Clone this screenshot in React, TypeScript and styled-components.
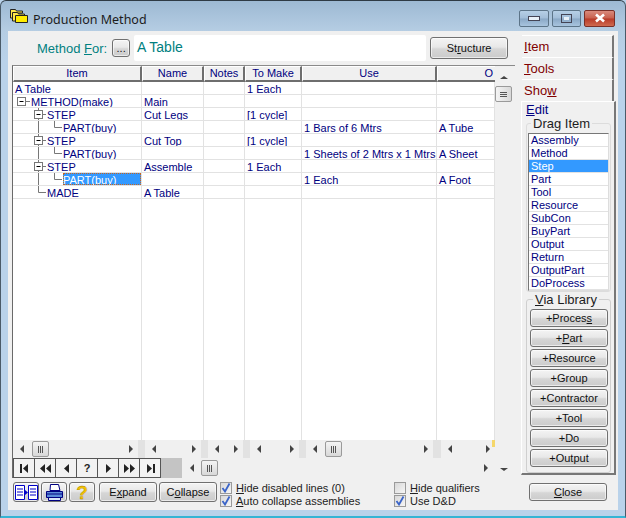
import React from 'react'
import styled, { createGlobalStyle, css } from 'styled-components'

const GlobalStyle = createGlobalStyle`
  html, body { margin: 0; padding: 0; background: #b9d2ea; }
  body { font-family: "Liberation Sans", Arial, sans-serif; font-size: 11px; color: #000; }
  * { box-sizing: border-box; }
  u { text-underline-offset: 1px; }
`

const navy = '#000080'

const Win = styled.div`
  width: 626px;
  height: 518px;
  display: flex;
  flex-direction: column;
  background: linear-gradient(180deg, #9db9d3 0, #b5cde3 30px, #b9d2ea 60px);
  border: 1px solid #4a5a68;
  border-top-color: #2e3a44;
  border-bottom: 2px solid #35b4d4;
  border-radius: 6px 6px 0 0;
  padding: 0 7px 6px 7px;
`
const TitleBar = styled.div`
  height: 30px;
  flex: none;
  display: flex;
  align-items: center;
  padding-left: 2px;
  gap: 5px;
`
const TitleText = styled.span`
  font-family: "Noto Sans", sans-serif;
  font-size: 12.5px;
  color: #1c1c1c;
  flex: 1;
  margin-top: 6px;
`
const Caption = styled.div`
  display: flex;
  gap: 3px;
  margin: 4px 3px 0 0;
`
const CapBtn = styled.div<{ $w: number; $close?: boolean }>`
  width: ${(p) => p.$w}px;
  height: 17px;
  display: flex;
  align-items: center;
  justify-content: center;
  border-radius: 2px;
  border: 1px solid ${(p) => (p.$close ? '#7a3028' : '#5c7488')};
  background: ${(p) =>
    p.$close
      ? 'linear-gradient(180deg, #d98a7c 0, #c8604e 48%, #b83a28 52%, #cf6a50 100%)'
      : 'linear-gradient(180deg, #b6cfe6 0, #a2bdd8 48%, #8aa8c6 52%, #a8c4de 100%)'};
`
const Body = styled.div`
  flex: 1;
  min-height: 0;
  display: flex;
  background: #f0f0f0;
  padding-top: 4px;
`
const Main = styled.div`
  width: 507px;
  flex: none;
  display: flex;
  flex-direction: column;
`
const TopRow = styled.div`
  height: 26px;
  display: flex;
  align-items: center;
  padding-left: 29px;
`
const MethodLabel = styled.span`
  color: #008080;
  font-size: 13px;
  margin-right: 5px;
  white-space: nowrap;
`
const MethodInput = styled.div`
  width: 292px;
  height: 26px;
  margin-left: 4px;
  margin-right: 4px;
  background: #fff;
  border-radius: 2px;
  color: #008080;
  font-size: 14px;
  line-height: 25px;
  padding-left: 3px;
`
const Btn = styled.button<{ $w?: number; $h?: number }>`
  width: ${(p) => p.$w ?? 78}px;
  height: ${(p) => p.$h ?? 18}px;
  flex: none;
  padding: 0;
  font-family: inherit;
  font-size: 11px;
  color: #111;
  display: inline-flex;
  align-items: center;
  justify-content: center;
  border: 1px solid #707070;
  border-radius: 3px;
  background: linear-gradient(180deg, #f4f4f4 0, #e8e8e8 45%, #d6d6d6 55%, #cbcbcb 100%);
  box-shadow: inset 0 0 0 1px rgba(255, 255, 255, 0.6);
`
const Frame = styled.div`
  margin: 4px 0 0 4px;
  height: 413px;
  display: flex;
  border-top: 1px solid #8a8a8a;
  border-left: 1px solid #6a6a6a;
`
const GridArea = styled.div`
  width: 482px;
  flex: none;
  display: flex;
  flex-direction: column;
`
const cols = '129px 62px 41px 57px 135px 58px'
const HeaderRow = styled.div`
  height: 16px;
  flex: none;
  display: grid;
  grid-template-columns: ${cols};
`
const HeadCell = styled.div<{ $right?: boolean }>`
  color: ${navy};
  font-size: 11px;
  line-height: 13px;
  text-align: ${(p) => (p.$right ? 'right' : 'center')};
  padding-right: ${(p) => (p.$right ? 2 : 0)}px;
  background: #f0f0f0;
  border-top: 1px solid #fff;
  border-left: 1px solid #fff;
  border-right: 2px solid #6e6e6e;
  border-bottom: 2px solid #6e6e6e;
  overflow: hidden;
  &:last-child { border-right: 0; }
`
const RowsArea = styled.div`
  flex: 1;
  min-height: 0;
  background: #fff;
  display: grid;
  grid-template-columns: ${cols};
  grid-template-rows: repeat(9, 13px) 1fr;
`
const Cell = styled.div`
  height: 13px;
  font-size: 11px;
  line-height: 14px;
  color: ${navy};
  white-space: nowrap;
  overflow: hidden;
  padding-left: 2px;
  border-right: 1px solid #e2e2e2;
  border-bottom: 1px solid #e2e2e2;
`
const TreeCell = styled(Cell)`
  display: flex;
  padding-left: 0;
`
const TreeLabel = styled.span<{ $sel?: boolean }>`
  ${(p) =>
    p.$sel &&
    css`
      background: #3399ff;
      color: #fff;
      flex: 1;
      outline: 1px dotted #c8651e;
      outline-offset: -1px;
    `}
`
const TailCell = styled.div`
  border-right: 1px solid #e2e2e2;
`
const ScrollRow = styled.div`
  height: 18px;
  flex: none;
  display: grid;
  grid-template-columns: 125px 7px 56px 7px 35px 7px 49px 7px 127px 8px 54px;
  background: #f0f0f0;
`
const Sep = styled.div`
  background: #e2e2e2;
`
const HBar = styled.div`
  position: relative;
  display: flex;
  align-items: center;
  justify-content: space-between;
  padding: 0 5px 0 7px;
  background: #f0f0f0;
`
const HBarThumbed = styled(HBar)`
  justify-content: flex-start;
`
const YellowMark = styled.div`
  position: absolute;
  right: 0;
  top: 0;
  width: 3px;
  height: 7px;
  background: #f5d76a;
`
const Thumb = styled.div<{ $v?: boolean }>`
  width: 17px;
  height: 16px;
  flex: none;
  display: flex;
  flex-direction: ${(p) => (p.$v ? 'column' : 'row')};
  align-items: center;
  justify-content: center;
  gap: 1px;
  border: 1px solid #9a9a9a;
  border-radius: 2px;
  background: linear-gradient(${(p) => (p.$v ? '90deg' : '180deg')}, #f4f4f4, #d8d8d8);
`
const Grip = styled.i<{ $v?: boolean }>`
  display: block;
  width: ${(p) => (p.$v ? 7 : 1)}px;
  height: ${(p) => (p.$v ? 1 : 7)}px;
  background: #555;
`
const Tri = styled.i<{ $d: 'l' | 'r' | 'u' | 'd' }>`
  display: block;
  width: 0;
  height: 0;
  flex: none;
  border-style: solid;
  border-color: transparent;
  ${(p) => p.$d === 'l' && css`border-width: 4px 4px 4px 0; border-right-color: #444;`}
  ${(p) => p.$d === 'r' && css`border-width: 4px 0 4px 4px; border-left-color: #444;`}
  ${(p) => p.$d === 'u' && css`border-width: 0 4px 3px 4px; border-bottom-color: #444;`}
  ${(p) => p.$d === 'd' && css`border-width: 3px 4px 0 4px; border-top-color: #444;`}
`
const Spacer = styled.div`
  flex: 1;
`
const ArrowGap = styled.div<{ $w: number; $h?: number }>`
  width: ${(p) => p.$w}px;
  height: ${(p) => p.$h ?? 1}px;
  flex: none;
`
const NavRow = styled.div`
  height: 20px;
  flex: none;
  display: flex;
  align-items: center;
`
const NavBtns = styled.div`
  display: flex;
  height: 20px;
  border: 1px solid #555;
  background: #555;
  gap: 1px;
`
const NavBtn = styled.div`
  width: 20px;
  height: 18px;
  display: flex;
  align-items: center;
  justify-content: center;
  background: #f2f2f2;
  color: #222;
  font-weight: 700;
  font-size: 11px;
`
const NavFill = styled.div`
  width: 21px;
  height: 20px;
  background: #c4c4c4;
`
const NavScroll = styled.div`
  flex: 1;
  height: 20px;
  display: flex;
  align-items: center;
  padding: 0 7px 0 8px;
  background: #f0f0f0;
`
const VBar = styled.div`
  width: 19px;
  flex: none;
  display: flex;
  flex-direction: column;
  align-items: center;
  padding: 10px 2px 7px 0;
`
const Bottom = styled.div`
  flex: 1;
  display: flex;
  align-items: flex-start;
  padding: 4px 0 0 5px;
`
const IconBtn = styled(Btn)`
  margin-right: 2px;
`
const HelpBtn = styled(IconBtn)`
  margin-right: 4px;
`
const ActionBtn = styled(Btn)`
  margin-right: 2px;
`
const CheckCol = styled.div<{ $w: number }>`
  width: ${(p) => p.$w}px;
  flex: none;
  margin: -1px 0 0 1px;
  display: flex;
  flex-direction: column;
`
const CheckLine = styled.div`
  height: 13px;
  display: flex;
  align-items: center;
  gap: 4px;
  font-size: 11px;
  color: #222;
  white-space: nowrap;
`
const CheckBox = styled.span`
  width: 12px;
  height: 12px;
  flex: none;
  display: flex;
  border: 1px solid #9a9a9a;
  background: linear-gradient(135deg, #d8d8d8, #f6f6f6);
`
const Side = styled.div`
  flex: 1;
  padding-left: 7px;
  display: flex;
  flex-direction: column;
`
const Tab = styled.div`
  height: 22px;
  width: 92px;
  padding: 3px 0 0 2px;
  color: #800000;
  font-size: 13px;
  line-height: 15px;
  background: #f0f0f0;
  border-top: 1px solid #fff;
  border-right: 2px solid #777;
`
const EditTab = styled.div`
  height: 374px;
  width: 95px;
  margin-left: -1px;
  display: flex;
  flex-direction: column;
  border-top: 1px solid #fff;
  border-left: 1px solid #fff;
  border-right: 2px solid #777;
  border-bottom: 2px solid #777;
  padding: 0 3px 0 4px;
`
const EditTitle = styled.div`
  color: ${navy};
  font-size: 13px;
  line-height: 16px;
`
const Group = styled.fieldset`
  margin: 0;
  padding: 0;
  border: 1px solid #dcdcdc;
  border-radius: 3px;
  min-width: 0;
`
const DragGroup = styled(Group)`
  margin-top: -1px;
  height: 175px;
  padding: 3px 0 0 1px;
`
const GroupTitle = styled.legend`
  font-size: 13px;
  line-height: 13px;
  color: #1c1c1c;
  padding: 0 2px;
  margin-left: 3px;
`
const ListBox = styled.div`
  width: 81px;
  height: 158px;
  background: #fff;
  border: 1px solid #777;
  border-right-color: #ddd;
  border-bottom-color: #ddd;
  overflow: hidden;
`
const ListItem = styled.div<{ $sel?: boolean }>`
  height: 13px;
  font-size: 11px;
  line-height: 13px;
  padding-left: 2px;
  color: ${(p) => (p.$sel ? '#fff' : navy)};
  background: ${(p) => (p.$sel ? '#3399ff' : '#fff')};
  border-bottom: 1px solid #e2e2e2;
`
const LibGroup = styled(Group)`
  margin-top: 1px;
  flex: 1;
  display: flex;
  flex-direction: column;
  gap: 2px;
  padding: 3px 0 0 3px;
  border-color: #cfcfcf;
`
const SideFoot = styled.div`
  padding: 8px 0 0 7px;
`
const HelpMark = styled.span`
  color: #f2c200;
  font-size: 19px;
  line-height: 19px;
  font-weight: 700;
  -webkit-text-stroke: 0.3px #a07800;
`

const tree: { label: string; kind: 'root' | 'method' | 'step' | 'part' | 'made'; sel?: boolean; cells: string[] }[] = [
  { label: 'A Table', kind: 'root', cells: ['', '', '1 Each', '', ''] },
  { label: 'METHOD(make)', kind: 'method', cells: ['Main', '', '', '', ''] },
  { label: 'STEP', kind: 'step', cells: ['Cut Legs', '', '[1 cycle]', '', ''] },
  { label: 'PART(buy)', kind: 'part', cells: ['', '', '', '1 Bars of 6 Mtrs', 'A Tube'] },
  { label: 'STEP', kind: 'step', cells: ['Cut Top', '', '[1 cycle]', '', ''] },
  { label: 'PART(buy)', kind: 'part', cells: ['', '', '', '1 Sheets of 2 Mtrs x 1 Mtrs', 'A Sheet'] },
  { label: 'STEP', kind: 'step', cells: ['Assemble', '', '1 Each', '', ''] },
  { label: 'PART(buy)', kind: 'part', sel: true, cells: ['', '', '', '1 Each', 'A Foot'] },
  { label: 'MADE', kind: 'made', cells: ['A Table', '', '', '', ''] },
]

const MinusBox = ({ x, y }: { x: number; y: number }) => (
  <>
    <rect x={x - 4} y={y - 4} width={8} height={8} fill="#fff" stroke="#777" />
    <path d={`M${x - 2} ${y}h4`} stroke="#000" />
  </>
)

// tree connectors, one svg per row; the offsets follow the reference row by row
const TreeGlyph = ({ kind }: { kind: string }) => {
  const w = kind === 'method' ? 18 : kind === 'part' ? 50 : 34
  const x = 8.5
  const y = 6.5
  return (
    <svg width={w} height={13} style={{ flex: 'none' }}>
      {kind === 'method' && (
        <>
          <path d={`M${x} ${y}H17`} stroke="#777" fill="none" />
          <MinusBox x={x} y={y} />
        </>
      )}
      {kind === 'step' && (
        <>
          <path d={`M25.5 0V13M25.5 ${y}H33`} stroke="#777" fill="none" />
          <MinusBox x={25.5} y={y} />
        </>
      )}
      {kind === 'part' && <path d={`M25.5 0V13M41.5 0V${y}H49`} stroke="#777" fill="none" />}
      {kind === 'made' && <path d={`M25.5 0V${y}H33`} stroke="#777" fill="none" />}
    </svg>
  )
}

const Folders = () => (
  <svg width={18} height={16} viewBox="0 0 18 16">
    <path d="M0.5 1.5h5l1 1.5h6v2h-8v5h-4z" fill="#ffe94a" stroke="#222" />
    <path d="M2.5 4.5h5l1 1.5h6v2h-8v5h-4z" fill="#ffe94a" stroke="#222" />
    <path d="M5.5 7.5h12v7h-12z" fill="#ffec00" stroke="#222" />
  </svg>
)

const NavGlyph = ({ d }: { d: string }) => (
  <svg width={13} height={9} viewBox="0 0 13 9">
    <path d={d} fill="#222" />
  </svg>
)

const navIcons = [
  'M2 0h2v9H2zM10 0v9L5 4.5z',
  'M6 0v9L1 4.5zM12 0v9L7 4.5z',
  'M9 0v9L4 4.5z',
  '',
  'M4 0v9l5-4.5z',
  'M1 0v9l5-4.5zM7 0v9l5-4.5z',
  'M3 0v9l5-4.5zM9 0h2v9H9z',
]

const Grips = ({ v }: { v?: boolean }) => (
  <Thumb $v={v}>
    <Grip $v={v} />
    <Grip $v={v} />
    <Grip $v={v} />
  </Thumb>
)

const ColumnsIcon = () => (
  <svg width={23} height={15} viewBox="0 0 23 15">
    <path d="M.5.5h9v14h-9zM13.5.5h9v14h-9z" fill="#fff" stroke="#0000c8" />
    <path d="M2 4h6M2 7h6M2 10h6M15 4h6M15 7h6M15 10h6" stroke="#0000c8" />
    <path d="M10 5l3 2.500-3 2.500z" fill="#0000c8" />
  </svg>
)

const PrinterIcon = () => (
  <svg width={19} height={17} viewBox="0 0 19 17">
    <path d="M5.500.5h8l1.500 6h-10z" fill="#fff" stroke="#000080" />
    <path d="M1.500 7.500h16v6h-16z" fill="#5a8ad8" stroke="#000080" />
    <path d="M3.500 13.500h12v3h-12z" fill="#d8e4f8" stroke="#000080" />
    <path d="M2 10h15" stroke="#000080" />
  </svg>
)

const Check = ({ on }: { on?: boolean }) => (
  <CheckBox>
    {on && (
      <svg width={10} height={10} viewBox="0 0 10 10">
        <path d="M1.500 5l2.500 3.500L8.500.5" fill="none" stroke="#3a64c8" strokeWidth={1.800} />
      </svg>
    )}
  </CheckBox>
)

const dragItems = ['Assembly', 'Method', 'Step', 'Part', 'Tool', 'Resource', 'SubCon', 'BuyPart', 'Output', 'Return', 'OutputPart', 'DoProcess']

const libItems: React.ReactNode[] = [
  <>+Proces<u>s</u></>,
  <>+<u>P</u>art</>,
  '+Resource',
  '+Group',
  '+Contractor',
  '+Tool',
  '+Do',
  '+Output',
]

export default function App() {
  return (
    <Win>
      <GlobalStyle />
      <TitleBar>
        <Folders />
        <TitleText>Production Method</TitleText>
        <Caption>
          <CapBtn $w={30}>
            <svg width={12} height={6}><rect x={.5} y={1.5} width={11} height={4} fill="#e8f0f8" stroke="#445" /></svg>
          </CapBtn>
          <CapBtn $w={29}>
            <svg width={11} height={9}><rect x={.5} y={.5} width={10} height={8} fill="none" stroke="#445" /><rect x={3} y={3} width={5} height={3} fill="#e8f0f8" /></svg>
          </CapBtn>
          <CapBtn $w={31} $close>
            <svg width={12} height={10}><path d="M2 1.500l8 7M10 1.500l-8 7" stroke="#fff" strokeWidth={2.600} /></svg>
          </CapBtn>
        </Caption>
      </TitleBar>
      <Body>
        <Main>
          <TopRow>
            <MethodLabel>Method <u>F</u>or:</MethodLabel>
            <Btn $w={18} $h={18}>...</Btn>
            <MethodInput>A Table</MethodInput>
            <Btn $h={22}>St<u>r</u>ucture</Btn>
          </TopRow>
          <Frame>
            <GridArea>
              <HeaderRow>
                {['Item', 'Name', 'Notes', 'To Make', 'Use'].map((h) => (
                  <HeadCell key={h}>{h}</HeadCell>
                ))}
                <HeadCell $right>O</HeadCell>
              </HeaderRow>
              <RowsArea>
                {tree.map((r, i) => (
                  <React.Fragment key={i}>
                    <TreeCell>
                      {r.kind === 'root' ? <ArrowGap $w={2} /> : <TreeGlyph kind={r.kind} />}
                      <TreeLabel $sel={r.sel}>{r.label}</TreeLabel>
                    </TreeCell>
                    {r.cells.map((c, j) => (
                      <Cell key={j}>{c}</Cell>
                    ))}
                  </React.Fragment>
                ))}
                {[0, 1, 2, 3, 4, 5].map((c) => (
                  <TailCell key={c} />
                ))}
              </RowsArea>
              <ScrollRow>
                <HBarThumbed>
                  <Tri $d="l" />
                  <ArrowGap $w={8} />
                  <Grips />
                  <Spacer />
                  <Tri $d="r" />
                </HBarThumbed>
                <Sep />
                <HBar><Tri $d="l" /><Tri $d="r" /></HBar>
                <Sep />
                <HBar><Tri $d="l" /><Tri $d="r" /></HBar>
                <Sep />
                <HBar><Tri $d="l" /><Tri $d="r" /></HBar>
                <Sep />
                <HBarThumbed>
                  <Tri $d="l" />
                  <ArrowGap $w={8} />
                  <Grips />
                  <Spacer />
                  <Tri $d="r" />
                </HBarThumbed>
                <Sep />
                <HBar><Tri $d="l" /><Tri $d="r" /><YellowMark /></HBar>
              </ScrollRow>
              <NavRow>
                <NavBtns>
                  {navIcons.map((d, i) => (
                    <NavBtn key={i}>{d ? <NavGlyph d={d} /> : '?'}</NavBtn>
                  ))}
                </NavBtns>
                <NavFill />
                <NavScroll>
                  <Tri $d="l" />
                  <ArrowGap $w={7} />
                  <Grips />
                  <Spacer />
                  <Tri $d="r" />
                </NavScroll>
              </NavRow>
            </GridArea>
            <VBar>
              <Tri $d="u" />
              <ArrowGap $w={1} $h={7} />
              <Grips v />
              <Spacer />
              <Tri $d="d" />
            </VBar>
          </Frame>
          <Bottom>
            <IconBtn $w={26} $h={20}><ColumnsIcon /></IconBtn>
            <IconBtn $w={26} $h={20}><PrinterIcon /></IconBtn>
            <HelpBtn $w={26} $h={20}><HelpMark>?</HelpMark></HelpBtn>
            <ActionBtn $w={58} $h={20}>E<u>x</u>pand</ActionBtn>
            <ActionBtn $w={58} $h={20}>C<u>o</u>llapse</ActionBtn>
            <CheckCol $w={173}>
              <CheckLine><Check on /><span><u>H</u>ide disabled lines (0)</span></CheckLine>
              <CheckLine><Check on /><span><u>A</u>uto collapse assemblies</span></CheckLine>
            </CheckCol>
            <CheckCol $w={100}>
              <CheckLine><Check /><span><u>H</u>ide qualifiers</span></CheckLine>
              <CheckLine><Check on /><span>Use D&amp;D</span></CheckLine>
            </CheckCol>
          </Bottom>
        </Main>
        <Side>
          <Tab><u>I</u>tem</Tab>
          <Tab><u>T</u>ools</Tab>
          <Tab>Sho<u>w</u></Tab>
          <EditTab>
            <EditTitle><u>E</u>dit</EditTitle>
            <DragGroup>
              <GroupTitle>Drag Item</GroupTitle>
              <ListBox>
                {dragItems.map((d) => (
                  <ListItem key={d} $sel={d === 'Step'}>{d}</ListItem>
                ))}
              </ListBox>
            </DragGroup>
            <LibGroup>
              <GroupTitle><u>V</u>ia Library</GroupTitle>
              {libItems.map((l, i) => (
                <Btn key={i}>{l}</Btn>
              ))}
            </LibGroup>
          </EditTab>
          <SideFoot>
            <Btn><u>C</u>lose</Btn>
          </SideFoot>
        </Side>
      </Body>
    </Win>
  )
}
